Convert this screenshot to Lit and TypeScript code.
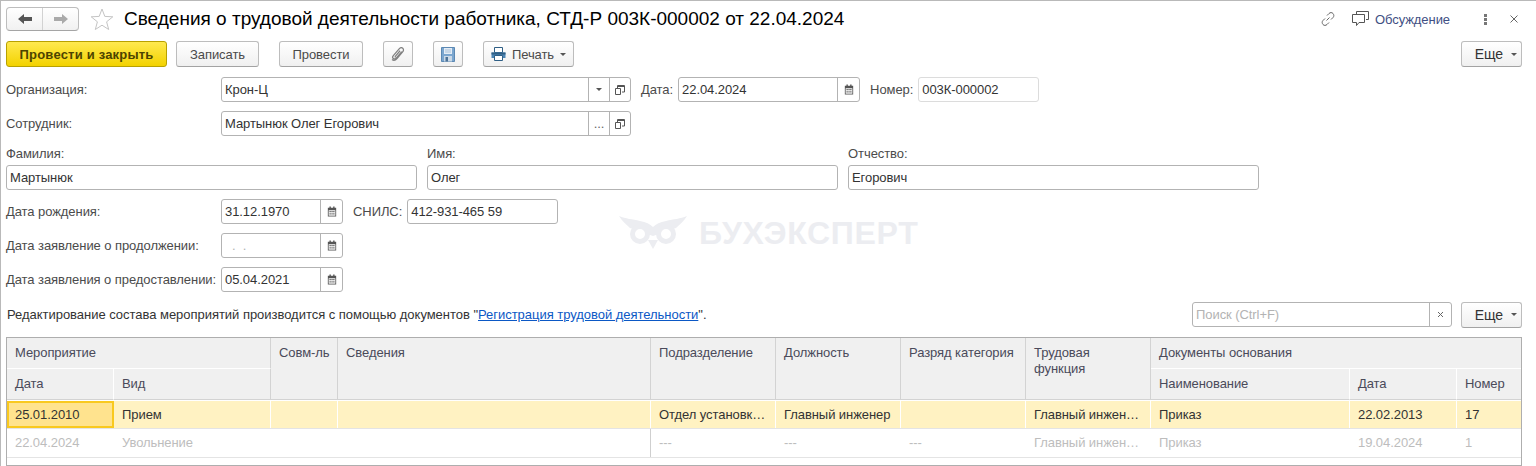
import { LitElement, html, css } from 'lit';
import { customElement } from 'lit/decorators.js';

const calendarIcon = html`<svg width="10" height="11" viewBox="0 0 12 13"><path d="M3 .5h1.500v2.500H3zM7.500 .5H9v2.500H7.500z" fill="#444"/><path d="M1 2h10v10.500H1z" fill="#555"/><path d="M2 5h8v6.500H2z" fill="#fff"/><path d="M3 6h1.500v1.400H3zM5.300 6h1.500v1.400H5.300zM7.500 6H9v1.400H7.500zM3 8.600h1.500V10H3zM5.300 8.600h1.500V10H5.300zM7.500 8.600H9V10H7.500z" fill="#555"/></svg>`;
const openIcon = html`<svg width="10" height="10" viewBox="0 0 10 10" fill="none" stroke="#555"><path d="M2.500 3V.5h7v6.500H7M2.500 1.500h7"/><path d="M.5 3.500h5v6h-5z"/></svg>`;
const dropArrow = html`<svg width="6" height="3" viewBox="0 0 6 3"><path d="M0 0h6L3 3z" fill="#555"/></svg>`;
const printerIcon = html`<svg width="15" height="14" viewBox="0 0 15 14"><path d="M3.500.5h8v5h-8z" fill="#fff" stroke="#2f5f85"/><path d="M.5 5.500h14v5.500H.5z" fill="#4c86b5"/><path d="M.5 5.500h14v2H.5z" fill="#2f5f85"/><path d="M3.500 8.500h8v5h-8z" fill="#fff" stroke="#2f5f85"/></svg>`;
const saveIcon = html`<svg width="14" height="15" viewBox="0 0 14 15"><path d="M.5.500h13v14H.5z" fill="#7ba6cf" stroke="#5b88b3"/><path d="M3 1h8v6H3z" fill="#e3ecf5"/><path d="M4 3h6M4 5h6" stroke="#a9c1d9"/><path d="M3 9h8v5.500H3z" fill="#cbd9e7"/><path d="M4.500 10h2.500v4.500H4.500z" fill="#4c7297"/></svg>`;
const clipIcon = html`<svg width="14" height="15" viewBox="0 0 16 18" fill="none" stroke="#808080" stroke-width="1.500"><path d="M12.500 5.500 5.800 13.300c-1 1.200-2.600 1.400-3.500.6-.9-.8-.9-2.300.1-3.500l7-8.200c1.300-1.500 3.100-1.700 4.300-.7 1.200 1 1.200 2.900-.1 4.400l-6.800 8c-1.700 2-4.200 2.600-6 1.200"/><path d="M10.500 4.500 5 11c-.5.600-.4 1.200 0 1.500"/></svg>`;

const columns = [107, 157, 67, 313, 125, 125, 125, 125, 199, 107, 65];
const gridTemplate = columns.map((w) => `${w}px`).join(' ');

const rows = [
  {
    current: true,
    cells: ['25.01.2010', 'Прием', '', '', 'Отдел установк…', 'Главный инженер', '', 'Главный инжен…', 'Приказ', '22.02.2013', '17'],
  },
  {
    current: false,
    cells: ['22.04.2024', 'Увольнение', '', '', '---', '---', '---', 'Главный инжен…', 'Приказ', '19.04.2024', '1'],
  },
];

const names = [
  ['Фамилия:', 'Мартынюк'],
  ['Имя:', 'Олег'],
  ['Отчество:', 'Егорович'],
];

@customElement('app-root')
export class AppRoot extends LitElement {
  static styles = css`
    :host {
      display: block;
      position: relative;
      width: 1536px;
      height: 466px;
      box-sizing: border-box;
      overflow: hidden;
      background: #fff;
      border-top: 1px solid #b9b9b9;
      border-left: 1px solid #b9b9b9;
      font-family: 'Liberation Sans', Arial, sans-serif;
      font-size: 13px;
      letter-spacing: -0.07px;
      color: #333;
    }

    .top {
      display: flex;
      align-items: center;
      height: 40px;
      padding: 0 0 4px 5px;
      box-sizing: border-box;
    }

    .nav {
      display: flex;
      width: 73px;
      height: 24px;
      box-sizing: border-box;
      border: 1px solid #bdbdbd;
      border-bottom-color: #a5a5a5;
      border-radius: 4px;
      background: linear-gradient(#fff, #f1f1f1);
    }

    .nav span {
      flex: 1;
      display: flex;
      align-items: center;
      justify-content: center;
    }

    .nav span + span {
      border-left: 1px solid #d2d2d2;
    }

    .star {
      margin-left: 11px;
    }

    h1 {
      margin: 0 0 0 10px;
      font-size: 19px;
      font-weight: normal;
      letter-spacing: 0;
      color: #000;
      white-space: nowrap;
    }

    .top-right {
      margin-left: auto;
      display: flex;
      align-items: center;
      padding-right: 18px;
      color: #3f4f83;
    }

    .discuss {
      margin-left: 16px;
      display: flex;
      align-items: center;
      gap: 6px;
    }

    .dots {
      margin-left: 34px;
    }

    .close {
      margin-left: 23px;
    }

    .toolbar {
      display: flex;
      height: 26px;
      padding: 0 14px 0 5px;
    }

    .btn {
      display: flex;
      align-items: center;
      justify-content: center;
      gap: 6px;
      height: 26px;
      flex: none;
      margin-left: 20px;
      box-sizing: border-box;
      border: 1px solid #bdbdbd;
      border-bottom-color: #a3a3a3;
      border-radius: 3px;
      background: linear-gradient(#fff, #f0f0f0);
      color: #4a4a4a;
      white-space: nowrap;
    }

    .btn.primary {
      width: 161px;
      margin-left: 0;
      border-color: #b8a100;
      background: linear-gradient(#ffe94f, #f3d200);
      color: #4c4300;
      font-weight: bold;
      letter-spacing: 0.2px;
    }

    .btn.write {
      width: 83px;
      margin-left: 9px;
    }

    .btn.post {
      width: 84px;
    }

    .btn.icon {
      width: 30px;
    }

    .btn.print {
      width: 91px;
    }

    .btn.more {
      margin-left: auto;
      width: 61px;
      gap: 8px;
      justify-content: flex-end;
      padding-right: 4px;
      font-size: 14px;
      color: #333;
    }

    .form {
      display: flex;
      flex-direction: column;
      gap: 9px;
      padding: 10px 0 0 5px;
    }

    .row {
      display: flex;
      align-items: center;
      height: 25px;
    }

    .label {
      color: #4b4b4b;
      white-space: nowrap;
    }

    .label.side {
      width: 215px;
      flex: none;
    }

    .label.gap {
      margin: 0 5px 0 10px;
    }

    .field {
      display: flex;
      align-items: center;
      height: 25px;
      box-sizing: border-box;
      flex: none;
      border: 1px solid #b3b3b3;
      border-radius: 3px;
      background: #fff;
    }

    .field.ref {
      width: 410px;
    }

    .field.date {
      width: 122px;
    }

    .field.date.long {
      width: 182px;
    }

    .field.number {
      width: 121px;
      border-color: #dcdcdc;
    }

    .field.snils {
      width: 151px;
    }

    .value {
      flex: 1;
      padding-left: 3px;
      white-space: nowrap;
      overflow: hidden;
    }

    .hint {
      color: #b3b3b3;
    }

    .addon {
      display: flex;
      align-items: center;
      justify-content: center;
      width: 21px;
      height: 100%;
      flex: none;
      box-sizing: border-box;
      border-left: 1px solid #b3b3b3;
      color: #666;
    }

    .addon.wide {
      width: 22px;
    }

    .names {
      display: flex;
      gap: 10px;
    }

    .names > div {
      width: 411px;
    }

    .names .label {
      height: 20px;
      line-height: 17px;
    }

    .names .field {
      width: 100%;
    }

    .info {
      display: flex;
      align-items: center;
      height: 25px;
      margin-top: 1px;
      padding: 0 14px 0 1px;
      color: #333;
    }

    .info .note {
      letter-spacing: -0.03px;
    }

    .info a {
      color: #0b58c5;
      text-decoration: underline;
    }

    .field.search {
      margin-left: auto;
      width: 260px;
    }

    .info .btn.more {
      margin-left: 9px;
    }

    .table {
      width: 1516px;
      height: 129px;
      margin-top: 1px;
      box-sizing: border-box;
      border: 1px solid #aeaeae;
      overflow: hidden;
    }

    .grid {
      display: grid;
      grid-template-rows: 31px 31px;
    }

    .head {
      box-sizing: border-box;
      padding: 7px 0 0 8px;
      background: #f0f0f0;
      border-right: 1px solid #d3d3d3;
      border-bottom: 1px solid #d3d3d3;
      color: #4a4a5a;
      line-height: 16px;
      white-space: nowrap;
    }

    .head.group {
      grid-column: span 2;
      border-bottom-color: #fff;
    }

    .head.docs {
      grid-column: span 3;
      border-right: 0;
      border-bottom-color: #fff;
    }

    .head.tall {
      grid-row: span 2;
    }

    .head.soft {
      border-right-color: #fff;
    }

    .head.last {
      border-right: 0;
    }

    .body-row {
      display: grid;
      height: 29px;
      box-sizing: border-box;
      border-bottom: 1px solid #e4e4e4;
    }

    .body-row.current {
      background: #fff2c2;
      border-top: 1px solid #fff;
    }

    .cell {
      box-sizing: border-box;
      padding: 0 8px;
      line-height: 28px;
      white-space: nowrap;
      overflow: hidden;
      color: #bdbdbd;
    }

    .cell.line {
      border-right: 1px solid #cfcfcf;
    }

    .current .cell {
      line-height: 27px;
      color: #333;
      border-right: 1px solid #fff;
    }

    .current .cell.focus {
      background: #ffe38e;
      border: 2px solid #f9c91f;
      padding: 0 6px;
      line-height: 23px;
    }

    .watermark {
      position: absolute;
      left: 617px;
      top: 214px;
      display: flex;
      align-items: center;
      gap: 11px;
      font-size: 32px;
      font-weight: bold;
      color: #ecedf1;
      letter-spacing: 0.7px;
      pointer-events: none;
    }
  `;

  private dateField(value: string, long = false, hint = false) {
    return html`<div class="field date ${long ? 'long' : ''}">
      <span class="value ${hint ? 'hint' : ''}">${value}</span>
      <span class="addon wide">${calendarIcon}</span>
    </div>`;
  }

  private refField(value: string, first: unknown) {
    return html`<div class="field ref">
      <span class="value">${value}</span>
      <span class="addon">${first}</span>
      <span class="addon">${openIcon}</span>
    </div>`;
  }

  render() {
    return html`
      <div class="top">
        <div class="nav">
          <span>
            <svg width="14" height="10" viewBox="0 0 14 10"><path d="M0 5l6-5v3h8v4H6v3z" fill="#555"/></svg>
          </span>
          <span>
            <svg width="14" height="10" viewBox="0 0 14 10"><path d="M14 5L8 0v3H0v4h8v3z" fill="#aaa"/></svg>
          </span>
        </div>
        <svg class="star" width="24" height="22" viewBox="0 0 24 22"><path d="M12 1l2.800 7.400 8 .4-6.200 5 2.100 7.700L12 17.200 5.300 21.500l2.100-7.700-6.200-5 8-.4z" fill="#fff" stroke="#c4c4c4"/></svg>
        <h1>Сведения о трудовой деятельности работника, СТД-Р 003К-000002 от 22.04.2024</h1>
        <div class="top-right">
          <svg width="16" height="16" viewBox="0 0 16 16" fill="none" stroke="#666"><path d="M6.500 9.500l3-3M7 4.500l2-2c1.200-1.200 3-1.200 4 0s1.200 2.800 0 4l-2 2M9 11.500l-2 2c-1.200 1.200-3 1.200-4 0s-1.200-2.800 0-4l2-2"/></svg>
          <span class="discuss">
            <svg width="17" height="16" viewBox="0 0 17 16" fill="none" stroke="#555"><path d="M4.500 3V.5h12v8H14"/><path d="M.5 3.500h12v8H7l-2.500 3v-3h-4z"/></svg>
            Обсуждение
          </span>
          <svg class="dots" width="3" height="11" viewBox="0 0 3 11"><path d="M0 0h3v3H0zM0 4h3v3H0zM0 8h3v3H0z" fill="#777"/></svg>
          <svg class="close" width="8" height="8" viewBox="0 0 8 8"><path d="M.5.500l7 7M7.500.500l-7 7" stroke="#666"/></svg>
        </div>
      </div>

      <div class="toolbar">
        <div class="btn primary">Провести и закрыть</div>
        <div class="btn write">Записать</div>
        <div class="btn post">Провести</div>
        <div class="btn icon">${clipIcon}</div>
        <div class="btn icon">${saveIcon}</div>
        <div class="btn print">${printerIcon}Печать ${dropArrow}</div>
        <div class="btn more">Еще ${dropArrow}</div>
      </div>

      <div class="form">
        <div class="row">
          <span class="label side">Организация:</span>
          ${this.refField('Крон-Ц', dropArrow)}
          <span class="label gap">Дата:</span>
          ${this.dateField('22.04.2024', true)}
          <span class="label gap">Номер:</span>
          <div class="field number"><span class="value">003К-000002</span></div>
        </div>
        <div class="row">
          <span class="label side">Сотрудник:</span>
          ${this.refField('Мартынюк Олег Егорович', '...')}
        </div>
        <div class="names">
          ${names.map(
            ([label, value]) => html`<div>
              <div class="label">${label}</div>
              <div class="field"><span class="value">${value}</span></div>
            </div>`
          )}
        </div>
        <div class="row">
          <span class="label side">Дата рождения:</span>
          ${this.dateField('31.12.1970')}
          <span class="label gap">СНИЛС:</span>
          <div class="field snils"><span class="value">412-931-465 59</span></div>
        </div>
        <div class="row">
          <span class="label side">Дата заявление о продолжении:</span>
          ${this.dateField('\u00a0\u00a0.\u00a0\u00a0.', false, true)}
        </div>
        <div class="row">
          <span class="label side">Дата заявления о предоставлении:</span>
          ${this.dateField('05.04.2021')}
        </div>
        <div class="info">
          <span class="note">Редактирование состава мероприятий производится с помощью документов "<a>Регистрация трудовой деятельности</a>".</span>
          <div class="field search">
            <span class="value hint">Поиск (Ctrl+F)</span>
            <span class="addon wide">
              <svg width="7" height="7" viewBox="0 0 7 7"><path d="M1 1l5 5M6 1L1 6" stroke="#666"/></svg>
            </span>
          </div>
          <div class="btn more">Еще ${dropArrow}</div>
        </div>
        <div class="table">
          <div class="grid" style="grid-template-columns:${gridTemplate}">
            <div class="head group">Мероприятие</div>
            <div class="head tall">Совм-ль</div>
            <div class="head tall">Сведения</div>
            <div class="head tall">Подразделение</div>
            <div class="head tall">Должность</div>
            <div class="head tall">Разряд категория</div>
            <div class="head tall">Трудовая<br />функция</div>
            <div class="head docs">Документы основания</div>
            <div class="head soft">Дата</div>
            <div class="head">Вид</div>
            <div class="head soft">Наименование</div>
            <div class="head soft">Дата</div>
            <div class="head last">Номер</div>
          </div>
          ${rows.map(
            (row) => html`<div class="body-row ${row.current ? 'current' : ''}" style="grid-template-columns:${gridTemplate}">
              ${row.cells.map(
                (text, i) => html`<div class="cell ${row.current && i === 0 ? 'focus' : ''} ${i === 3 ? 'line' : ''}">${text}</div>`
              )}
            </div>`
          )}
        </div>
      </div>

      <div class="watermark">
        <svg width="70" height="36" viewBox="0 0 70 36" fill="none">
          <path d="M1 0C8 3 14 3 22 5c6 1 10 3 13 6 3-3 7-5 13-6 8-2 14-2 21-5-3 5-7 8-11 12L35 20 12 12C8 8 4 5 1 0z" fill="#ecedf1"/>
          <circle cx="22" cy="18" r="7.500" stroke="#ecedf1" stroke-width="5" fill="#fff"/>
          <circle cx="48" cy="18" r="7.500" stroke="#ecedf1" stroke-width="5" fill="#fff"/>
          <path d="M30 24h10l-5 9z" fill="#ecedf1"/>
        </svg>
        БУХЭКСПЕРТ
      </div>
    `;
  }
}
